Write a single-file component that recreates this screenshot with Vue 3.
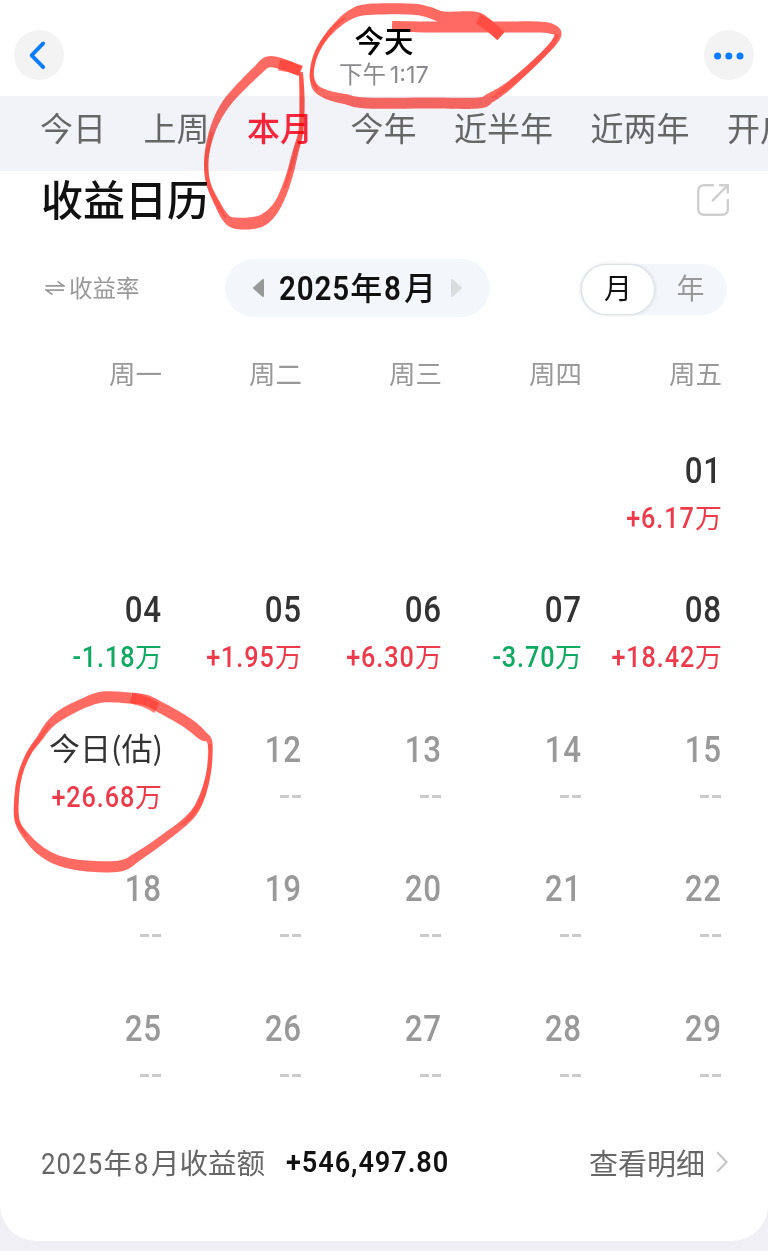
<template>
  <div class="page">
    <header class="header">
      <button class="round-btn" aria-label="返回">
        <svg width="50" height="50" viewBox="0 0 50 50">
          <path d="M29.2 13.4 L17.6 25.4 L29.2 37.2" fill="none" stroke="#0a7cff" stroke-width="3.8" stroke-linecap="round" stroke-linejoin="round" />
        </svg>
      </button>
      <div class="header-title">
        <div class="day">今天</div>
        <div class="time">下午 1:17</div>
      </div>
      <button class="round-btn" aria-label="更多">
        <svg width="50" height="50" viewBox="0 0 50 50" fill="#0a7cff">
          <circle cx="13.6" cy="26" r="3.5" />
          <circle cx="24.8" cy="26" r="3.5" />
          <circle cx="36" cy="26" r="3.5" />
        </svg>
      </button>
    </header>

    <nav class="tabs">
      <span v-for="tab in tabs" :key="tab" class="tab" :class="{ active: tab === activeTab }">{{ tab }}</span>
    </nav>

    <main class="card">
      <div class="card-head">
        <h1>收益日历</h1>
        <svg width="34" height="34" viewBox="0 0 34 34" fill="none" stroke="#cfcfcf" stroke-width="2.4" stroke-linecap="round">
          <path d="M17 2.2 H8 Q2.2 2.2 2.2 8 V26 Q2.2 31.8 8 31.8 H26 Q31.8 31.8 31.8 26 V17" />
          <path d="M16.8 17.4 L31.4 2.6 M24 2.2 H31.8 V9.6" />
        </svg>
      </div>

      <div class="controls">
        <div class="switch">
          <svg width="20" height="16" viewBox="0 0 20 16" fill="none" stroke="#999" stroke-width="1.7">
            <path d="M0.5 5.8 H18.5 L12.5 1.4" />
            <path d="M19 10.2 H1.5 L7.5 14.6" />
          </svg>
          <span>收益率</span>
        </div>
        <div class="month">
          <svg width="13" height="20" viewBox="0 0 13 20">
            <path d="M11 2 V18 L2 10 Z" fill="#999" stroke="#999" stroke-width="2" stroke-linejoin="round" />
          </svg>
          <div class="month-text"><b class="digits">2025</b>年<b class="digits one">8</b>月</div>
          <svg width="13" height="20" viewBox="0 0 13 20">
            <path d="M2 2 V18 L11 10 Z" fill="#dadde0" stroke="#dadde0" stroke-width="2" stroke-linejoin="round" />
          </svg>
        </div>
        <div class="toggle">
          <span class="on">月</span>
          <span>年</span>
        </div>
      </div>

      <div class="week">
        <span v-for="w in weekdays" :key="w">{{ w }}</span>
      </div>

      <div class="calendar">
        <div v-for="(d, i) in days" :key="i" class="cell">
          <template v-if="d.day">
            <div class="num" :class="{ future: !d.amount, today: d.today }">{{ d.day }}</div>
            <div v-if="d.amount" class="amount" :class="d.amount > 0 ? 'up' : 'down'">
              <span class="value">{{ format(d.amount) }}</span><i>万</i>
            </div>
            <div v-else class="empty"><b></b><b></b></div>
          </template>
        </div>
      </div>

      <footer class="footer">
        <div class="sum-label"><b class="digits">2025</b>年<b class="digits one">8</b>月收益额</div>
        <div class="sum">+546,497.80</div>
        <div class="detail">
          查看明细
          <svg width="12" height="22" viewBox="0 0 12 22">
            <path d="M1.2 1.2 L10.6 11 L1.2 20.8" fill="none" stroke="#c4c4c4" stroke-width="2" />
          </svg>
        </div>
      </footer>
    </main>

    <!-- 手绘标记 -->
    <svg class="ink" width="768" height="1251" viewBox="0 0 768 1251">
      <path v-for="(s, i) in strokes" :key="i" :d="ribbon(s.points)" :fill-opacity="s.opacity" />
    </svg>
  </div>
</template>

<script setup>
import { ref } from 'vue'

const tabs = ['今日', '上周', '本月', '今年', '近半年', '近两年', '开户']
const activeTab = ref('本月')
const weekdays = ['周一', '周二', '周三', '周四', '周五']

const days = ref([
  {}, {}, {}, {},
  { day: '01', amount: 6.17 },
  { day: '04', amount: -1.18 },
  { day: '05', amount: 1.95 },
  { day: '06', amount: 6.3 },
  { day: '07', amount: -3.7 },
  { day: '08', amount: 18.42 },
  { day: '今日(估)', amount: 26.68, today: true },
  ...[12, 13, 14, 15, 18, 19, 20, 21, 22, 25, 26, 27, 28, 29].map((day) => ({ day })),
])

const format = (n) => (n > 0 ? '+' : '') + n.toFixed(2)

// 每个点: [x, y, 笔宽]
const strokes = [
  {
    opacity: 0.76,
    points: [
      [392, 26, 10], [430, 27, 11], [500, 27, 11], [538, 27, 11], [552, 29, 10], [558, 34, 7], [552, 45, 6], [530, 67, 6],
      [507, 87, 8], [490, 98, 10], [478, 103, 11], [430, 103, 11], [366, 103, 11], [345, 99, 10], [328, 95, 9],
      [316, 88, 7], [312, 76, 4], [314, 60, 4], [322, 43, 4.5], [334, 28, 6], [350, 15, 9], [368, 9.5, 11], [410, 9, 11],
      [428, 12, 11], [444, 17, 11], [474, 17, 11], [486, 23, 11], [501, 36, 11],
    ],
  },
  { opacity: 0.6, points: [[478, 19, 10], [488, 25, 11], [501, 36, 11]] },
  {
    opacity: 0.45,
    points: [[557, 34, 4], [551, 46, 5], [530, 67, 6], [507, 87, 5], [492, 98, 2]],
  },
  {
    opacity: 0.5,
    points: [[318, 90, 2], [312, 80, 4], [312, 70, 4], [318, 49, 4], [333, 28, 4], [345, 18, 2]],
  },
  {
    opacity: 0.76,
    points: [
      [300, 71, 10], [282, 64, 11], [268, 62, 11], [258, 70, 10], [235, 93, 9], [222, 110, 8], [212, 132, 6], [206.5, 158, 4.5],
      [208, 182, 4.5], [217, 203, 6], [226, 218, 8], [235, 223, 11], [253, 223, 12], [266, 218, 11], [278, 204, 8],
      [288, 180, 7], [296, 150, 6], [301, 130, 5], [302, 100, 5], [301, 72, 4],
    ],
  },
  { opacity: 0.65, points: [[279, 65, 11], [290, 67, 11], [301, 71, 11]] },
  {
    opacity: 0.45,
    points: [[212, 132, 3], [206.5, 158, 4], [208, 182, 4], [218, 205, 4], [226, 218, 2]],
  },
  {
    opacity: 0.45,
    points: [[285, 188, 2], [296, 150, 4], [301, 130, 4], [302, 100, 5], [301, 74, 4]],
  },
  {
    opacity: 0.76,
    points: [
      [131, 698, 11], [103, 697, 11], [84, 703, 10], [64, 713, 10], [50, 724, 8], [39, 739, 6], [29, 753, 5], [21, 772, 4.5],
      [17, 793, 4.5], [17, 820, 5], [27, 837, 7], [41, 851, 9], [60, 861, 10], [87, 866, 11], [120, 866, 11],
      [137, 857, 9], [163, 839, 8], [190, 817, 7], [202, 797, 6], [209, 770, 4.5], [210, 743, 5], [202, 735, 10], [186, 722, 11],
      [158, 706, 11], [145, 700, 11], [131, 698, 11],
    ],
  },
  { opacity: 0.65, points: [[131, 698, 11], [145, 702, 11], [157, 708, 11]] },
  {
    opacity: 0.45,
    points: [[50, 724, 2], [39, 739, 4], [29, 753, 4], [21, 772, 4], [17, 793, 4.5], [17, 820, 4.5], [27, 837, 2]],
  },
  {
    opacity: 0.45,
    points: [[179, 826, 1], [191, 816, 4], [202, 797, 5], [209, 770, 4.5], [210, 744, 4]],
  },
]

// 经过各点的平滑曲线, 按笔宽向两侧展开
const ribbon = (pts) => {
  const line = []
  for (let i = 0; i < pts.length - 1; i++) {
    const a = pts[i - 1] || pts[i]
    const b = pts[i]
    const c = pts[i + 1]
    const d = pts[i + 2] || c
    for (let t = 0; t < 1; t += 0.125) {
      line.push(b.map((_, k) => 0.5 * (2 * b[k] + (c[k] - a[k]) * t + (2 * a[k] - 5 * b[k] + 4 * c[k] - d[k]) * t * t + (3 * b[k] - a[k] - 3 * c[k] + d[k]) * t * t * t)))
    }
  }
  line.push(pts[pts.length - 1])
  const left = []
  const right = []
  line.forEach(([x, y, w], i) => {
    const p = line[i - 1] || line[i]
    const n = line[i + 1] || line[i]
    const len = Math.hypot(n[0] - p[0], n[1] - p[1]) || 1
    const nx = (-(n[1] - p[1]) / len) * (w / 2)
    const ny = ((n[0] - p[0]) / len) * (w / 2)
    left.push(`${(x + nx).toFixed(1)} ${(y + ny).toFixed(1)}`)
    right.unshift(`${(x - nx).toFixed(1)} ${(y - ny).toFixed(1)}`)
  })
  return `M${[...left, ...right].join('L')}Z`
}
</script>

<style>
body {
  background: #fff;
}
</style>

<style scoped>
.page {
  position: relative;
  width: 768px;
  height: 1251px;
  overflow: hidden;
  background: #efeff5;
  font-family: Roboto, "Noto Sans CJK SC", sans-serif;
  color: #111;
}
i {
  font-style: normal;
}
svg {
  display: block;
}
/* 窄体数字 */
.digits {
  display: inline-block;
  margin-right: -0.31em;
  font-weight: inherit;
  letter-spacing: 1px;
  transform: scaleX(0.87);
  transform-origin: left;
}
.digits.one {
  margin: 0 -0.02em 0 0.06em;
}
.header {
  display: flex;
  justify-content: space-between;
  align-items: flex-start;
  height: 96px;
  padding: 0 14px;
  box-sizing: border-box;
  background: #fff;
}
.round-btn {
  width: 50px;
  height: 50px;
  margin-top: 30px;
  padding: 0;
  border: none;
  border-radius: 50%;
  background: #f3f3f4;
}
.header-title {
  padding-top: 23px;
  text-align: center;
}
.day {
  font-size: 29.5px;
  line-height: 38px;
  font-weight: 500;
  color: #000;
}
.time {
  font-family: Inter, "Noto Sans CJK SC", sans-serif;
  font-size: 23.5px;
  line-height: 27px;
  word-spacing: -3px;
  color: #8a8a8e;
}
.tabs {
  display: flex;
  gap: 37.5px;
  height: 75px;
  padding-left: 40px;
  overflow: hidden;
  box-sizing: border-box;
  background: #f2f3f9;
}
.tab {
  flex: none;
  font-size: 33px;
  line-height: 67px;
  color: #666;
}
.tab.active {
  color: #f5263c;
  font-weight: 500;
}
.card {
  height: 1070px;
  background: #fff;
  border-radius: 0 0 36px 36px;
}
.card-head {
  display: flex;
  justify-content: space-between;
  align-items: center;
  height: 58px;
  padding: 0 38px 0 41px;
}
h1 {
  margin: 4px 0 0;
  font-size: 42px;
  line-height: 58px;
  font-weight: 500;
}
.controls {
  display: flex;
  align-items: center;
  height: 58px;
  margin-top: 30px;
  padding: 0 41px 0 45px;
}
.switch {
  display: flex;
  align-items: center;
  gap: 4px;
  width: 180px;
  font-size: 23.5px;
  color: #999;
}
.switch span {
  margin-top: -3px;
}
.month {
  display: flex;
  align-items: center;
  justify-content: space-between;
  width: 265px;
  height: 58px;
  padding: 0 27px;
  box-sizing: border-box;
  border-radius: 29px;
  background: #f3f7fb;
}
.month-text {
  font-size: 32px;
  line-height: 58px;
  font-weight: 500;
  white-space: nowrap;
}
.month-text .digits {
  font-size: 34px;
  font-weight: 600;
}
.toggle {
  display: flex;
  width: 147px;
  height: 51px;
  margin: 2px 0 0 auto;
  border-radius: 26px;
  background: #f3f7fb;
  font-size: 28px;
  line-height: 51px;
  text-align: center;
  color: #999;
}
.toggle span {
  flex: 1;
}
.toggle .on {
  flex: none;
  width: 72px;
  height: 49px;
  margin: 1px 0 0 2px;
  line-height: 49px;
  border-radius: 25px;
  background: #fff;
  color: #111;
  box-shadow: 0 0 4px rgba(60, 60, 80, 0.28);
}
.week {
  display: grid;
  grid-template-columns: repeat(5, 140px);
  margin: 38px 0 0 22px;
  font-size: 26.5px;
  line-height: 39px;
  text-align: right;
  color: #999;
}
.calendar {
  display: grid;
  grid-template-columns: repeat(5, 140px);
  grid-auto-rows: 139.4px;
  margin: 56px 0 0 22px;
  text-align: right;
}
.num {
  font-size: 36px;
  line-height: 43px;
  padding-bottom: 1px;
  font-weight: 500;
  letter-spacing: 1px;
  transform: scaleX(0.87);
  transform-origin: right;
  color: #333;
}
.num.future {
  color: #999;
}
.num.today {
  font-family: "Noto Sans CJK SC", sans-serif;
  font-size: 31px;
  line-height: 36px;
  padding: 0 0 8px;
  font-weight: 400;
  letter-spacing: 0;
  transform: translateX(1px);
}
.amount {
  font-size: 29px;
  line-height: 48px;
  font-weight: 500;
  white-space: nowrap;
}
.amount .value {
  display: inline-block;
  letter-spacing: 1px;
  transform: scaleX(0.87);
  transform-origin: right;
}
.amount i {
  font-size: 27px;
  font-weight: 400;
}
.up {
  color: #ee3b4b;
}
.down {
  color: #10aa62;
}
.empty {
  display: flex;
  justify-content: flex-end;
  gap: 3px;
  padding: 22px 1px 0 0;
}
.empty b {
  width: 9px;
  height: 3px;
  background: #cbcbcb;
}
.footer {
  display: flex;
  align-items: center;
  height: 44px;
  margin-top: -7px;
  padding: 0 40px 0 41px;
  font-size: 28.5px;
  color: #666;
}
.sum-label {
  width: 245px;
  white-space: nowrap;
}
.sum-label .digits {
  font-size: 29.5px;
  letter-spacing: 1.3px;
}
.sum {
  width: 180px;
  font-size: 29.5px;
  font-weight: 600;
  letter-spacing: 1px;
  transform: scaleX(0.92);
  transform-origin: left;
  color: #111;
}
.detail {
  display: flex;
  align-items: center;
  gap: 11px;
  margin-left: auto;
  font-size: 29px;
}
.ink {
  position: absolute;
  left: 0;
  top: 0;
  fill: #ff3b30;
  mix-blend-mode: multiply;
  pointer-events: none;
}
</style>
